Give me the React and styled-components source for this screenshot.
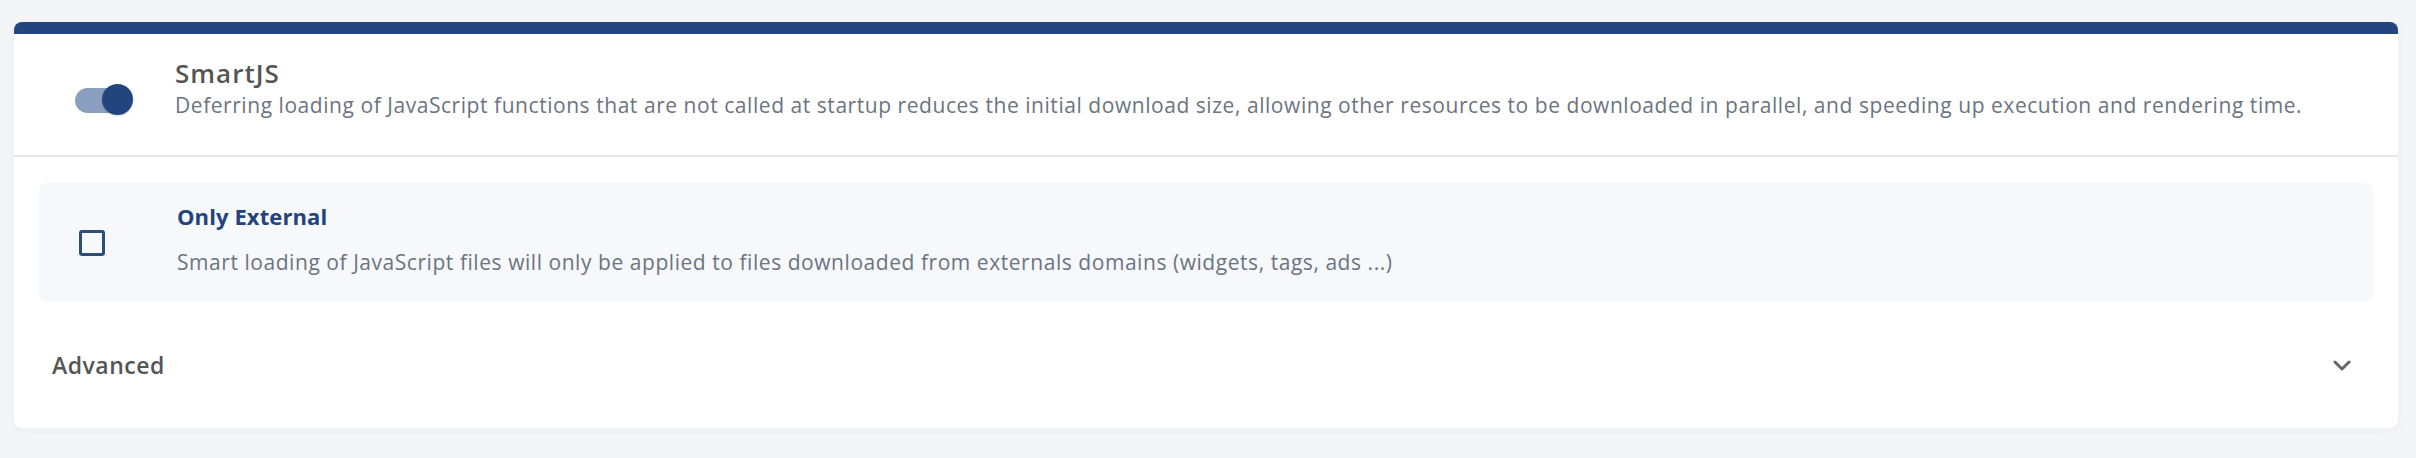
import styled, { createGlobalStyle } from "styled-components";
import { useState } from "react";

const Global = createGlobalStyle`
    body{
        margin: 0;
        background: #f4f5f9;
        font-family: "Open Sans", "Liberation Sans", sans-serif;
    }
`;
const Page = styled.div`
    padding: 22px 18px 31px 14px;
`;
const Card = styled.section`
    background: #fff;
    border-top: 12px solid #22457f;
    border-radius: 8px;
    box-shadow: 0 2px 10px rgba(40, 50, 80, 0.04);
`;
const Header = styled.div`
    display: flex;
    align-items: flex-start;
    gap: 42px;
    height: 97px;
    padding: 24px 0 0 61px;
    border-bottom: 2px solid #e8e8ea;
`;
const Switch = styled.button`
    position: relative;
    flex: none;
    width: 58px;
    height: 32px;
    margin-top: 26px;
    padding: 0;
    border: 0;
    background: none;
    cursor: pointer;
    &::before{
        content: "";
        position: absolute;
        left: 0;
        top: 4px;
        width: 50px;
        height: 25px;
        border-radius: 13px;
        background: ${p => p.$on ? "#8ba0c1" : "#c9ced8"};
    }
    &::after{
        content: "";
        position: absolute;
        top: 0;
        left: ${p => p.$on ? "27px" : "0"};
        width: 31px;
        height: 31px;
        border-radius: 50%;
        background: ${p => p.$on ? "#22457f" : "#fff"};
        box-shadow: 0 1px 3px rgba(0, 0, 0, 0.15);
    }
`;
const Title = styled.h2`
    margin: 0 0 4px 0;
    font-size: 26px;
    font-weight: 600;
    letter-spacing: 1px;
    color: #555;
    line-height: 30px;
`;
const Desc = styled.p`
    margin: 0;
    font-size: 21px;
    letter-spacing: 0.55px;
    color: #6b7480;
    line-height: 26px;
`;
const Body = styled.div`
    padding: 26px 25px 0 25px;
`;
const Option = styled.label`
    display: flex;
    align-items: center;
    gap: 72px;
    height: 119px;
    padding-left: 40px;
    background: #f7f8fc;
    border-radius: 8px;
    cursor: pointer;
    & > div{
        margin-bottom: 8px;
    }
`;
const Box = styled.span`
    flex: none;
    width: 26px;
    height: 26px;
    box-sizing: border-box;
    border: 3px solid #2c4f78;
    border-radius: 3px;
    background: ${p => p.$checked ? "#2c4f78" : "transparent"};
`;
const OptionTitle = styled.h3`
    margin: 0 0 20px 0;
    font-size: 22px;
    font-weight: 700;
    letter-spacing: 0.1px;
    color: #22437e;
    line-height: 26px;
`;
const Advanced = styled.button`
    display: flex;
    align-items: center;
    justify-content: space-between;
    width: 100%;
    height: 126px;
    padding: 0 47px 0 38px;
    border: 0;
    background: none;
    font-family: inherit;
    font-size: 23px;
    font-weight: 600;
    letter-spacing: 0.5px;
    color: #555;
    cursor: pointer;
    svg{
        width: 18px;
        height: 11px;
    }
`;

export default function App(){
    const [on, setOn] = useState(true);
    const [external, setExternal] = useState(false);
    return(
        <>
            <Global />
            <Page>
                <Card>
                    <Header>
                        <Switch $on={on} onClick={() => setOn(!on)} aria-label="SmartJS" />
                        <div>
                            <Title>SmartJS</Title>
                            <Desc>Deferring loading of JavaScript functions that are not called at startup reduces the initial download size, allowing other resources to be downloaded in parallel, and speeding up execution and rendering time.</Desc>
                        </div>
                    </Header>
                    <Body>
                        <Option onClick={() => setExternal(!external)}>
                            <Box $checked={external} />
                            <div>
                                <OptionTitle>Only External</OptionTitle>
                                <Desc>Smart loading of JavaScript files will only be applied to files downloaded from externals domains (widgets, tags, ads ...)</Desc>
                            </div>
                        </Option>
                    </Body>
                    <Advanced>
                        Advanced
                        <svg viewBox="0 0 18 11" fill="none" stroke="#666" strokeWidth="3" strokeLinecap="round" strokeLinejoin="round">
                            <path d="M2 2l7 7 7-7" />
                        </svg>
                    </Advanced>
                </Card>
            </Page>
        </>
    )
}
